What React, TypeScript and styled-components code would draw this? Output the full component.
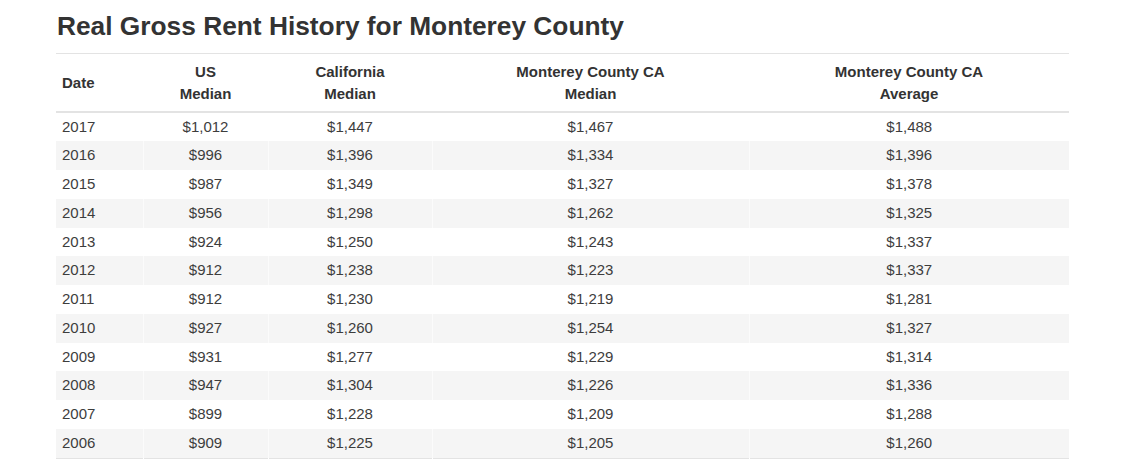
import React from "react";
import styled, { createGlobalStyle } from "styled-components";

const GlobalStyle = createGlobalStyle`
  html, body {
    margin: 0;
    padding: 0;
    background: #ffffff;
  }
  body {
    font-family: "Liberation Sans", Arial, Helvetica, sans-serif;
    color: #333333;
  }
`;

const Page = styled.section`
  padding: 12px 0 0 56px;
  width: 1013px;
`;

const Title = styled.h1`
  margin: 0 0 12px 1px;
  font-size: 26.3px;
  line-height: 28.6px;
  font-weight: 700;
  color: #333333;
`;

const Table = styled.table`
  width: 1013px;
  border-collapse: collapse;
  table-layout: fixed;
  font-size: 15px;
  border-top: 1px solid #e3e3e3;
  border-bottom: 1px solid #e3e3e3;
`;

const HeadCell = styled.th<{ $left?: boolean; $width: number }>`
  box-sizing: border-box;
  width: ${(p) => p.$width}px;
  padding: 7px 6px 6px;
  line-height: 22px;
  font-weight: 700;
  font-size: 15px;
  color: #333333;
  text-align: ${(p) => (p.$left ? "left" : "center")};
  vertical-align: middle;
  border-bottom: 2px solid #e3e3e3;
`;

const Row = styled.tr<{ $striped: boolean }>`
  background: ${(p) => (p.$striped ? "#f5f5f5" : "#ffffff")};
`;

const Cell = styled.td<{ $left?: boolean }>`
  box-sizing: border-box;
  padding: 4px 6px;
  line-height: 20.75px;
  color: #3d3d3d;
  text-align: ${(p) => (p.$left ? "left" : "center")};
  & + & {
    border-left: 1px solid rgba(255, 255, 255, 0.6);
  }
`;

const columns = [
  { label: ["Date"], width: 87, left: true },
  { label: ["US", "Median"], width: 125 },
  { label: ["California", "Median"], width: 164 },
  { label: ["Monterey County CA", "Median"], width: 317 },
  { label: ["Monterey County CA", "Average"], width: 320 },
];

const rows: string[][] = [
  ["2017", "$1,012", "$1,447", "$1,467", "$1,488"],
  ["2016", "$996", "$1,396", "$1,334", "$1,396"],
  ["2015", "$987", "$1,349", "$1,327", "$1,378"],
  ["2014", "$956", "$1,298", "$1,262", "$1,325"],
  ["2013", "$924", "$1,250", "$1,243", "$1,337"],
  ["2012", "$912", "$1,238", "$1,223", "$1,337"],
  ["2011", "$912", "$1,230", "$1,219", "$1,281"],
  ["2010", "$927", "$1,260", "$1,254", "$1,327"],
  ["2009", "$931", "$1,277", "$1,229", "$1,314"],
  ["2008", "$947", "$1,304", "$1,226", "$1,336"],
  ["2007", "$899", "$1,228", "$1,209", "$1,288"],
  ["2006", "$909", "$1,225", "$1,205", "$1,260"],
];

const App = () => {
  return (
    <>
      <GlobalStyle />
      <Page>
        <Title>Real Gross Rent History for Monterey County</Title>
        <Table>
          <thead>
            <tr>
              {columns.map((col, i) => (
                <HeadCell key={i} $left={col.left} $width={col.width}>
                  {col.label.map((line, j) => (
                    <React.Fragment key={j}>
                      {j > 0 && <br />}
                      {line}
                    </React.Fragment>
                  ))}
                </HeadCell>
              ))}
            </tr>
          </thead>
          <tbody>
            {rows.map((row, i) => (
              <Row key={row[0]} $striped={i % 2 === 1}>
                {row.map((value, j) => (
                  <Cell key={j} $left={j === 0}>
                    {value}
                  </Cell>
                ))}
              </Row>
            ))}
          </tbody>
        </Table>
      </Page>
    </>
  );
};

export default App;
